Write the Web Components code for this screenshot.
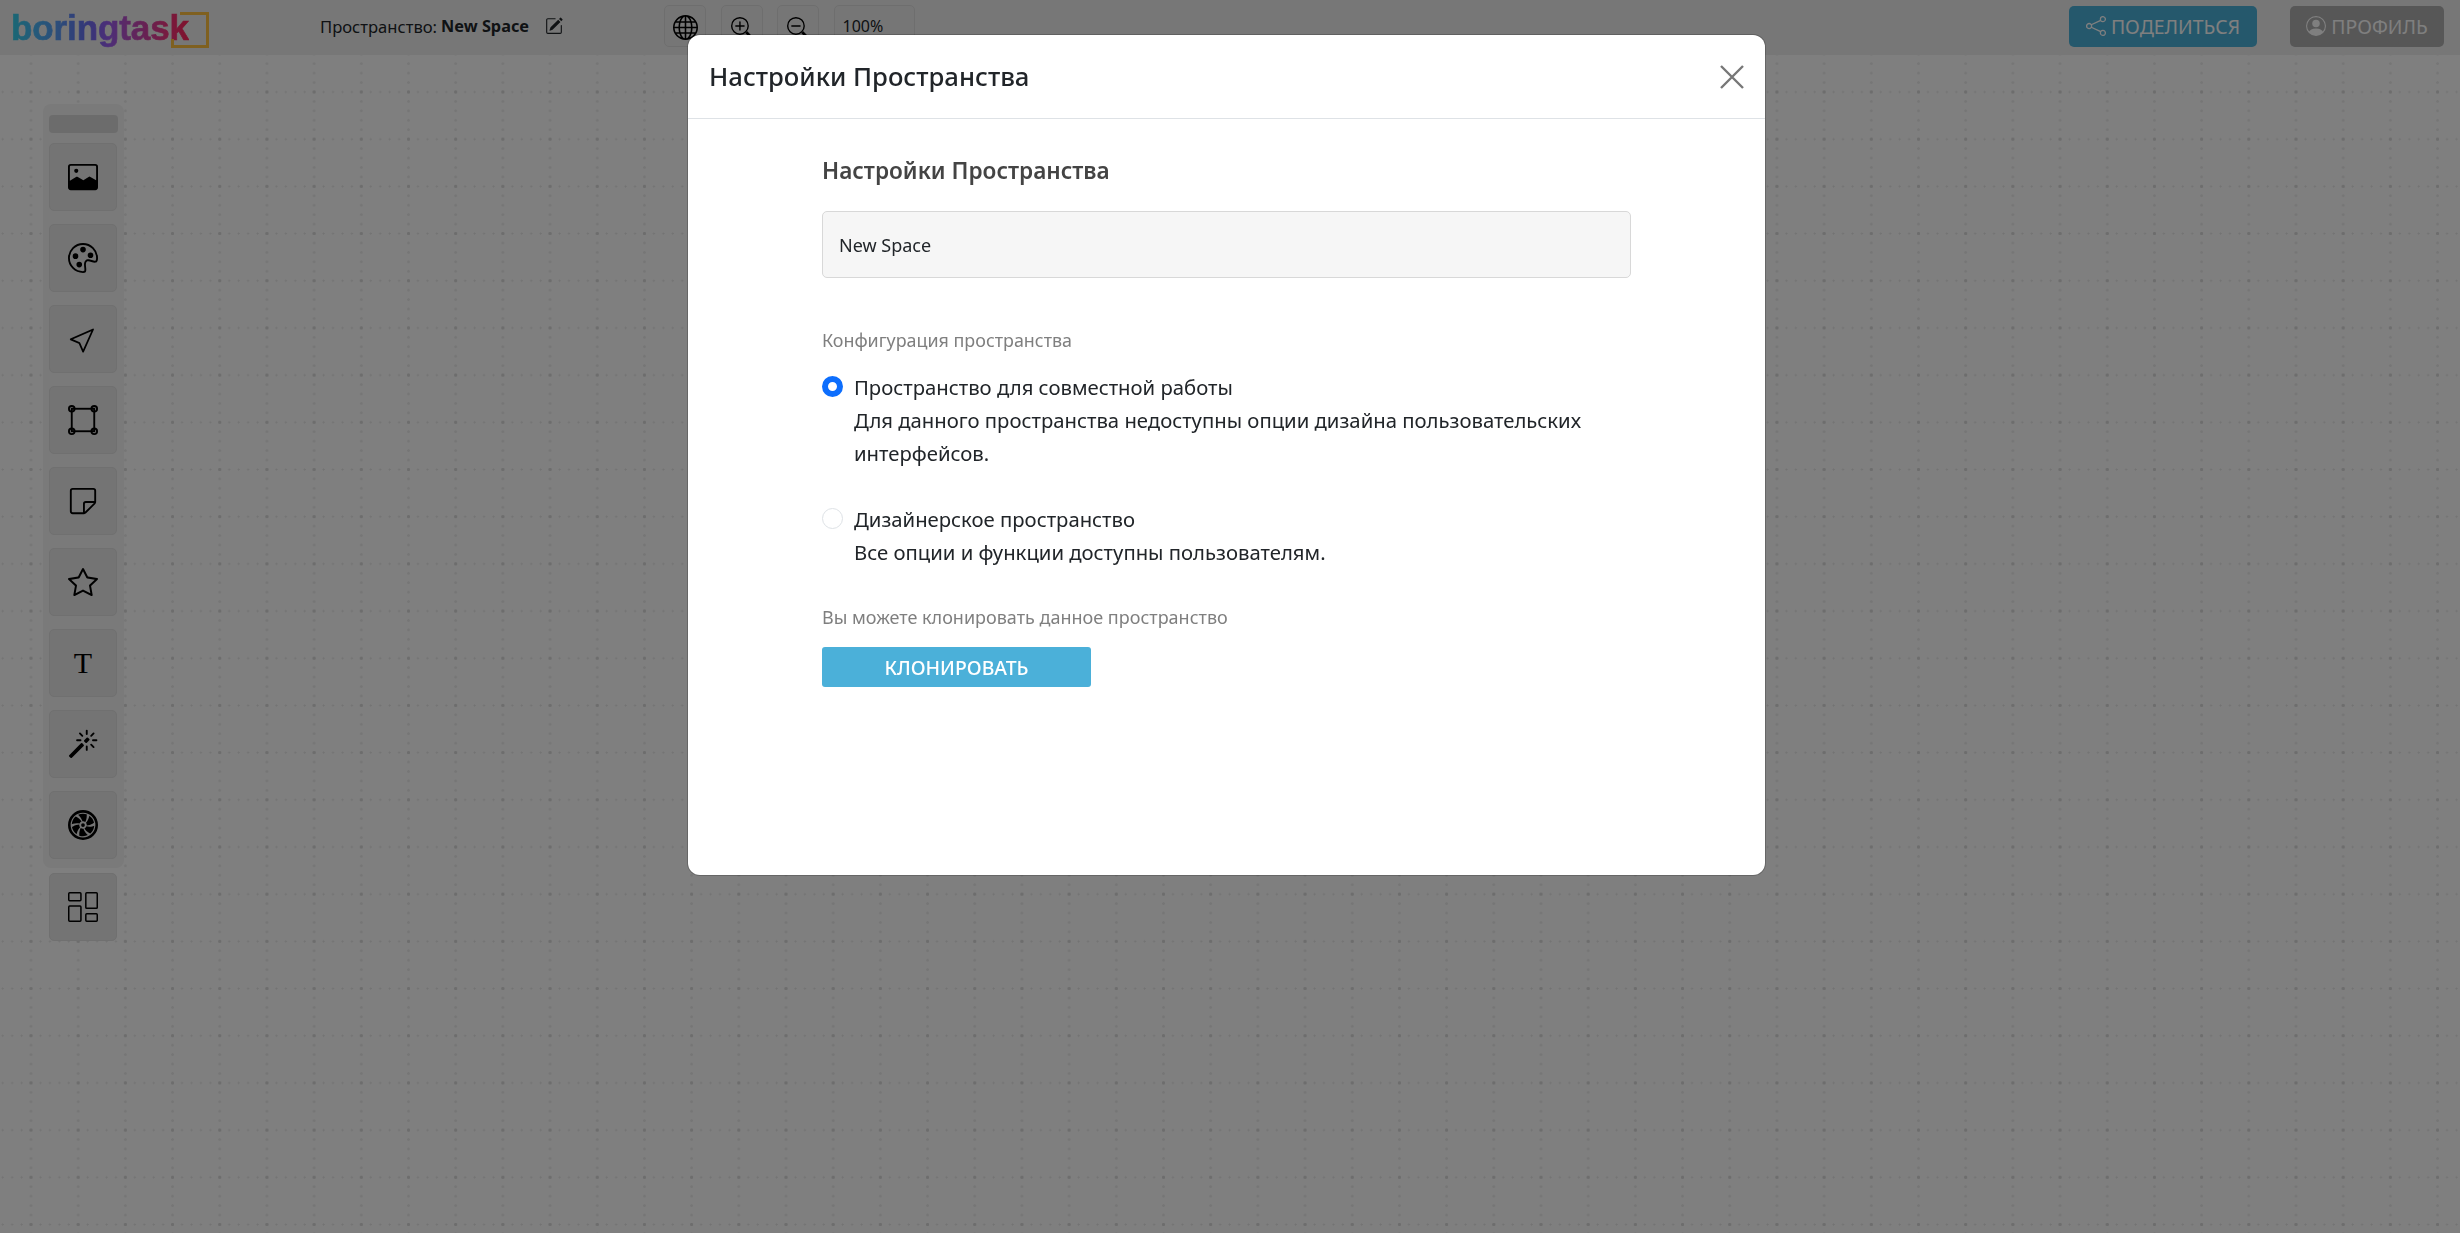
<!DOCTYPE html>
<html lang="en">
  <head>
    <meta charset="UTF-8" />
    <title>boringtask</title>
    <style>
      html, body { margin: 0; height: 100%; overflow: hidden; }
      body { font-family: "Noto Sans", "Open Sans", sans-serif; color: #212529; }
    </style>
  </head>
  <body>
    <app-canvas>
      <top-bar slot="top"></top-bar>
      <tool-panel slot="tools"></tool-panel>
    </app-canvas>

    <settings-modal title="Настройки Пространства">
      <space-option checked title="Пространство для совместной работы">Для данного пространства недоступны опции дизайна пользовательских интерфейсов.</space-option>
      <space-option title="Дизайнерское пространство">Все опции и функции доступны пользователям.</space-option>
    </settings-modal>

    <script type="text/javascript">
      const ICONS = {
        palette: '<path d="M8 5a1.5 1.5 0 1 0 0-3 1.5 1.5 0 0 0 0 3zm4 3a1.5 1.5 0 1 0 0-3 1.5 1.5 0 0 0 0 3zM5.5 7a1.5 1.5 0 1 1-3 0 1.5 1.5 0 0 1 3 0zm.5 6a1.5 1.5 0 1 0 0-3 1.5 1.5 0 0 0 0 3z"/><path d="M16 8c0 3.15-1.866 2.585-3.567 2.07C11.42 9.763 10.465 9.473 10 10c-.603.683-.475 1.819-.351 2.92C9.826 14.495 9.996 16 8 16a8 8 0 1 1 8-8zm-8 7c.611 0 .654-.171.655-.176.078-.146.124-.464.07-1.119-.014-.168-.037-.37-.061-.591-.052-.464-.112-1.005-.118-1.462-.01-.707.083-1.61.704-2.314.369-.417.845-.578 1.272-.618.404-.038.812.026 1.16.104.343.077.702.186 1.025.284l.028.008c.346.105.658.199.953.266.653.148.904.083.991.024C14.717 9.38 15 9.161 15 8a7 7 0 1 0-7 7z"/>',
        cursor: '<path d="M14.082 2.182a.5.5 0 0 1 .103.557L8.528 15.467a.5.5 0 0 1-.917-.007L5.57 10.694.803 8.652a.5.5 0 0 1-.006-.916l12.728-5.657a.5.5 0 0 1 .556.103zM2.25 8.184l3.897 1.67a.5.5 0 0 1 .262.263l1.67 3.897L12.743 3.52 2.25 8.184z"/>',
        sticky: '<path d="M2.5 1A1.5 1.5 0 0 0 1 2.5v11A1.5 1.5 0 0 0 2.5 15h6.086a1.5 1.5 0 0 0 1.06-.44l4.915-4.914A1.5 1.5 0 0 0 15 8.586V2.5A1.5 1.5 0 0 0 13.5 1h-11zM2 2.5a.5.5 0 0 1 .5-.5h11a.5.5 0 0 1 .5.5V8H9.5A1.5 1.5 0 0 0 8 9.5V14H2.5a.5.5 0 0 1-.5-.5v-11zm7 11.293V9.5a.5.5 0 0 1 .5-.5h4.293L9 13.793z"/>',
        star: '<path d="M2.866 14.85c-.078.444.36.791.746.593l4.39-2.256 4.389 2.256c.386.198.824-.149.746-.592l-.83-4.73 3.522-3.356c.33-.314.16-.888-.282-.95l-4.898-.696L8.465.792a.513.513 0 0 0-.927 0L5.354 5.12l-4.898.696c-.441.062-.612.636-.283.95l3.523 3.356-.83 4.73zm4.905-2.767-3.686 1.894.694-3.957a.565.565 0 0 0-.163-.505L1.71 6.745l4.052-.576a.525.525 0 0 0 .393-.288L8 2.223l1.847 3.658a.525.525 0 0 0 .393.288l4.052.575-2.906 2.77a.565.565 0 0 0-.163.506l.694 3.957-3.686-1.894a.503.503 0 0 0-.461 0z"/>',
        magic: '<path d="M9.5 2.672a.5.5 0 1 0 1 0V.843a.5.5 0 0 0-1 0v1.829Zm4.5.035A.5.5 0 0 0 13.293 2L12 3.293a.5.5 0 1 0 .707.707L14 2.707ZM7.293 4A.5.5 0 1 0 8 3.293L6.707 2A.5.5 0 0 0 6 2.707L7.293 4Zm-.621 2.5a.5.5 0 1 0 0-1H4.843a.5.5 0 1 0 0 1h1.829Zm8.485 0a.5.5 0 1 0 0-1h-1.829a.5.5 0 0 0 0 1h1.829ZM13.293 10A.5.5 0 1 0 14 9.293L12.707 8a.5.5 0 1 0-.707.707L13.293 10ZM9.5 11.157a.5.5 0 0 0 1 0V9.328a.5.5 0 0 0-1 0v1.829Zm1.854-5.097a.5.5 0 0 0 0-.706l-.708-.708a.5.5 0 0 0-.707 0L8.646 5.94a.5.5 0 0 0 0 .707l.708.708a.5.5 0 0 0 .707 0l1.293-1.293Zm-3 3a.5.5 0 0 0 0-.706l-.708-.708a.5.5 0 0 0-.707 0L.646 13.94a.5.5 0 0 0 0 .707l.708.708a.5.5 0 0 0 .707 0L8.354 9.06Z"/>',
        image: '<path fill-rule="evenodd" d="M1.5 1A1.5 1.5 0 0 0 0 2.5v11A1.5 1.5 0 0 0 1.5 15h13a1.5 1.5 0 0 0 1.5-1.5v-11A1.5 1.5 0 0 0 14.5 1h-13zm0 1h13a.5.5 0 0 1 .5.5v7.2l-3.3-1.9a.5.5 0 0 0-.5 0L8.2 9.7 5 7.9a.5.5 0 0 0-.5 0L1 10v-7.5a.5.5 0 0 1 .5-.5z"/><circle cx="4.4" cy="4.7" r="1.1"/>',
        box: '<g fill="none" stroke="currentColor" stroke-width="1"><rect x="2" y="2" width="12" height="12"/><circle cx="2" cy="2" r="1.5" fill="none"/><circle cx="14" cy="2" r="1.5"/><circle cx="2" cy="14" r="1.5"/><circle cx="14" cy="14" r="1.5"/></g>',
        fan: '<path d="M10 3c0 1.313-.304 2.508-.8 3.4a1.991 1.991 0 0 0-1.484-.38c-.28-.982-.91-2.04-1.838-2.969a8.368 8.368 0 0 0-.491-.454A5.976 5.976 0 0 1 8 2c.691 0 1.355.117 1.973.332.018.219.027.442.027.668Zm0 5c0 .073-.004.146-.012.217 1.018-.019 2.2-.353 3.331-1.006a8.39 8.39 0 0 0 .57-.361 6.004 6.004 0 0 0-2.53-3.823 9.02 9.02 0 0 1-.145.64c-.34 1.269-.944 2.346-1.656 3.079.277.343.442.78.442 1.254Zm-.137.728a2.007 2.007 0 0 1-1.07 1.109c.525.87 1.405 1.725 2.535 2.377.2.116.402.222.605.317a5.986 5.986 0 0 0 2.053-4.111c-.208.073-.421.14-.641.199-1.264.339-2.493.356-3.482.11ZM8 10c-.45 0-.866-.149-1.2-.4-.494.89-.796 2.082-.796 3.391 0 .23.01.457.027.678A5.99 5.99 0 0 0 8 14c.94 0 1.83-.216 2.623-.602a8.359 8.359 0 0 1-.497-.458c-.925-.926-1.555-1.981-1.836-2.96-.094.013-.191.02-.29.02ZM6 8c0-.08.005-.16.014-.239-1.02.017-2.205.351-3.34 1.007a8.366 8.366 0 0 0-.568.359 6.003 6.003 0 0 0 2.525 3.839 8.37 8.37 0 0 1 .148-.653c.34-1.267.94-2.342 1.65-3.075A1.988 1.988 0 0 1 6 8Zm-3.347-.632c1.267-.34 2.498-.355 3.488-.107.196-.494.583-.89 1.07-1.1-.524-.874-1.406-1.733-2.541-2.388a8.363 8.363 0 0 0-.594-.312 5.987 5.987 0 0 0-2.06 4.106c.206-.074.418-.14.637-.199ZM8 9a1 1 0 1 0 0-2 1 1 0 0 0 0 2Z"/><circle cx="8" cy="8" r="7.3" fill="none" stroke="currentColor" stroke-width="1.4"/>',
        layout: '<g fill="none" stroke="currentColor" stroke-width=".8"><rect x=".4" y=".4" width="6.5" height="4.2" rx=".5"/><rect x=".4" y="7.5" width="6.5" height="8.1" rx=".5"/><rect x="9.5" y=".4" width="6.1" height="8.3" rx=".5"/><rect x="9.5" y="11.6" width="6.1" height="4" rx=".5"/></g>',
        globe: '<path d="M0 8a8 8 0 1 1 16 0A8 8 0 0 1 0 8zm7.5-6.923c-.67.204-1.335.82-1.887 1.855A7.97 7.97 0 0 0 5.145 4H7.5V1.077zM4.09 4a9.267 9.267 0 0 1 .64-1.539 6.7 6.7 0 0 1 .597-.933A7.025 7.025 0 0 0 2.255 4H4.09zm-.582 3.5c.03-.877.138-1.718.312-2.5H1.674a6.958 6.958 0 0 0-.656 2.5h2.49zM4.847 5a12.5 12.5 0 0 0-.338 2.5H7.5V5H4.847zM8.5 5v2.5h2.99a12.495 12.495 0 0 0-.337-2.5H8.5zM4.51 8.5a12.5 12.5 0 0 0 .337 2.5H7.5V8.5H4.51zm3.99 0V11h2.653c.187-.765.306-1.608.338-2.5H8.5zM5.145 12c.138.386.295.744.468 1.068.552 1.035 1.218 1.65 1.887 1.855V12H5.145zm.182 2.472a6.696 6.696 0 0 1-.597-.933A9.268 9.268 0 0 1 4.09 12H2.255a7.024 7.024 0 0 0 3.072 2.472zM3.82 11a13.652 13.652 0 0 1-.312-2.5h-2.49c.062.89.291 1.733.656 2.5H3.82zm6.853 3.472A7.024 7.024 0 0 0 13.745 12H11.91a9.27 9.27 0 0 1-.64 1.539 6.688 6.688 0 0 1-.597.933zM8.5 12v2.923c.67-.204 1.335-.82 1.887-1.855.173-.324.33-.682.468-1.068H8.5zm3.68-1h2.146c.365-.767.594-1.61.656-2.5h-2.49a13.65 13.65 0 0 1-.312 2.5zm2.802-3.5a6.959 6.959 0 0 0-.656-2.5H12.18c.174.782.282 1.623.312 2.5h2.49zM11.27 2.461c.247.464.462.98.64 1.539h1.835a7.024 7.024 0 0 0-3.072-2.472c.218.284.418.598.597.933zM10.855 4a7.966 7.966 0 0 0-.468-1.068C9.835 1.897 9.17 1.282 8.5 1.077V4h2.355z"/>',
        zoomIn: '<path fill-rule="evenodd" d="M6.5 12a5.5 5.5 0 1 0 0-11 5.5 5.5 0 0 0 0 11zM13 6.5a6.5 6.5 0 1 1-13 0 6.5 6.5 0 0 1 13 0z"/><path d="M10.344 11.742c.03.04.062.078.098.115l3.85 3.85a1 1 0 0 0 1.415-1.414l-3.85-3.85a1.007 1.007 0 0 0-.115-.1 6.538 6.538 0 0 1-1.398 1.4z"/><path fill-rule="evenodd" d="M6.5 3a.5.5 0 0 1 .5.5V6h2.5a.5.5 0 0 1 0 1H7v2.5a.5.5 0 0 1-1 0V7H3.5a.5.5 0 0 1 0-1H6V3.5a.5.5 0 0 1 .5-.5z"/>',
        zoomOut: '<path fill-rule="evenodd" d="M6.5 12a5.5 5.5 0 1 0 0-11 5.5 5.5 0 0 0 0 11zM13 6.5a6.5 6.5 0 1 1-13 0 6.5 6.5 0 0 1 13 0z"/><path d="M10.344 11.742c.03.04.062.078.098.115l3.85 3.85a1 1 0 0 0 1.415-1.414l-3.85-3.85a1.007 1.007 0 0 0-.115-.1 6.538 6.538 0 0 1-1.398 1.4z"/><path fill-rule="evenodd" d="M3 6.5a.5.5 0 0 1 .5-.5h6a.5.5 0 0 1 0 1h-6a.5.5 0 0 1-.5-.5z"/>',
        edit: '<path d="M15.502 1.94a.5.5 0 0 1 0 .706L14.459 3.69l-2-2L13.502.646a.5.5 0 0 1 .707 0l1.293 1.293zm-1.75 2.456-2-2L4.939 9.21a.5.5 0 0 0-.121.196l-.805 2.414a.25.25 0 0 0 .316.316l2.414-.805a.5.5 0 0 0 .196-.12l6.813-6.814z"/><path fill-rule="evenodd" d="M1 13.5A1.5 1.5 0 0 0 2.5 15h11a1.5 1.5 0 0 0 1.5-1.5v-6a.5.5 0 0 0-1 0v6a.5.5 0 0 1-.5.5h-11a.5.5 0 0 1-.5-.5v-11a.5.5 0 0 1 .5-.5H9a.5.5 0 0 0 0-1H2.5A1.5 1.5 0 0 0 1 2.5v11z"/>',
        share: '<path d="M13.5 1a1.5 1.5 0 1 0 0 3 1.5 1.5 0 0 0 0-3zM11 2.5a2.5 2.5 0 1 1 .603 1.628l-6.718 3.12a2.499 2.499 0 0 1 0 1.504l6.718 3.12a2.5 2.5 0 1 1-.488.876l-6.718-3.12a2.5 2.5 0 1 1 0-3.256l6.718-3.12A2.5 2.5 0 0 1 11 2.5zm-8.5 4a1.5 1.5 0 1 0 0 3 1.5 1.5 0 0 0 0-3zm11 5.5a1.5 1.5 0 1 0 0 3 1.5 1.5 0 0 0 0-3z"/>',
        person: '<path d="M11 6a3 3 0 1 1-6 0 3 3 0 0 1 6 0z"/><path fill-rule="evenodd" d="M0 8a8 8 0 1 1 16 0A8 8 0 0 1 0 8zm8-7a7 7 0 0 0-5.468 11.37C3.242 11.226 4.805 10 8 10s4.757 1.225 5.468 2.37A7 7 0 0 0 8 1z"/>',
      }

      class BiIcon extends HTMLElement {
        constructor() {
          super()
          const size = this.getAttribute('size') || 16
          this.attachShadow({ mode: 'open' }).innerHTML = `
            <style>
              :host { display: inline-flex; line-height: 0; }
            </style>
            <svg width="${size}" height="${size}" viewBox="0 0 16 16" fill="currentColor">${ICONS[this.getAttribute('name')]}</svg>`
        }
      }

      class AppCanvas extends HTMLElement {
        constructor() {
          super()
          this.attachShadow({ mode: 'open' }).innerHTML = `
            <style>
              :host { display: flex; flex-direction: column; height: 100vh; background: #fff; }
              main {
                flex: 1;
                padding: 49px 0 0 43px;
                background-image:
                  radial-gradient(circle at 1.5px 1.5px, #dadada 1.2px, transparent 1.8px),
                  radial-gradient(circle at 1.5px 1.5px, #e6e6e6 .8px, transparent 1.3px),
                  radial-gradient(circle at 1.5px 1.5px, #ececec 1px, transparent 1.6px);
                background-size: 47.2px 47.2px, 9.44px 47.2px, 47.2px 9.44px;
                background-position: 29.5px 35.5px, 29.5px 35.5px, 29.5px 35.5px;
              }
            </style>
            <slot name="top"></slot>
            <main><slot name="tools"></slot></main>`
        }
      }

      class TopBar extends HTMLElement {
        constructor() {
          super()
          this.attachShadow({ mode: 'open' }).innerHTML = `
            <style>
              :host { display: flex; align-items: center; height: 55px; box-sizing: border-box; padding: 0 16px 3px 11px; background: #efefef; font-size: 16.6px; color: #212529; }
              .logo { flex: none; width: 198px; height: 36px; margin-top: 7px; position: relative; font: bold 35px/32px "Liberation Sans", sans-serif; letter-spacing: -.1px; }
              .logo b { display: inline-block; height: 36px; background: linear-gradient(90deg, #34d0e8 0%, #48b8f4 12%, #5a96f4 28%, #6870f0 42%, #9a5cf0 55%, #b850c8 65%, #d4409e 78%, #f03680 88%, #ff2458 100%); -webkit-background-clip: text; background-clip: text; color: transparent; -webkit-text-stroke: .7px transparent; }
              .frame { position: absolute; left: 169px; top: 0; width: 29px; height: 36px; box-sizing: border-box; border: solid #ffc040; border-width: 3px 3px 3px 0; }
              .stub { position: absolute; left: 160px; bottom: 0; width: 9px; height: 9px; box-sizing: border-box; border: solid #ffc040; border-width: 0 0 3px 3px; }
              .name { margin-left: 111px; display: flex; align-items: center; gap: 4px; width: 344px; }
              .name strong { font-size: 16.3px; font-weight: 700; }
              .name bi-icon { margin-left: 12px; }
              .tool { width: 42px; height: 42px; box-sizing: border-box; margin-right: 14.5px; padding-top: 3px; display: flex; align-items: center; justify-content: center; background: #ededed; border: 1px solid #ddd; border-radius: 5px; color: #000; }
              .pct { width: 81px; justify-content: flex-start; padding: 0 0 0 8px; font-size: 16px; color: #212529; }
              .spacer { flex: 1; }
              .btn { height: 41px; box-sizing: border-box; display: flex; align-items: center; justify-content: center; gap: 5px; border-radius: 5px; color: #fff; font-size: 19.4px; }
              .share { width: 188px; background: #4bb0d9; margin-right: 33px; }
              .profile { width: 154px; background: #aeaeae; }
            </style>
            <div class="logo"><b>boringtask</b><span class="frame"></span><span class="stub"></span></div>
            <div class="name"><span>Пространство:</span> <strong>New Space</strong><bi-icon name="edit" size="18"></bi-icon></div>
            <div class="tool"><bi-icon name="globe" size="25"></bi-icon></div>
            <div class="tool"><bi-icon name="zoomIn" size="22"></bi-icon></div>
            <div class="tool"><bi-icon name="zoomOut" size="22"></bi-icon></div>
            <div class="tool pct">100%</div>
            <div class="spacer"></div>
            <div class="btn share"><bi-icon name="share" size="20"></bi-icon>ПОДЕЛИТЬСЯ</div>
            <div class="btn profile"><bi-icon name="person" size="20"></bi-icon>ПРОФИЛЬ</div>`
        }
      }

      class ToolPanel extends HTMLElement {
        constructor() {
          super()
          const item = (name, size) => `<div class="tool"><bi-icon name="${name}" size="${size || 30}"></bi-icon></div>`
          this.attachShadow({ mode: 'open' }).innerHTML = `
            <style>
              :host { display: flex; flex-direction: column; align-items: flex-start; gap: 5px; width: 81px; }
              .panel { width: 81px; box-sizing: border-box; padding: 11px 6px 9px; background: #f4f4f4; border-radius: 8px; display: flex; flex-direction: column; gap: 13px; }
              .handle { height: 18px; background: #d8d8d8; border-radius: 4px; margin-bottom: -3px; }
              .tool { width: 68px; height: 68px; box-sizing: border-box; display: flex; align-items: center; justify-content: center; background: #e8e8e8; border: 1px solid #e0e0e0; border-radius: 5px; color: #000; }
              .t { font: 30px/1 "Liberation Serif", serif; }
              .last { margin-left: 6px; }
            </style>
            <div class="panel">
              <div class="handle"></div>
              ${item('image')}${item('palette')}${item('cursor', 28)}${item('box')}${item('sticky')}${item('star')}
              <div class="tool t">T</div>
              ${item('magic')}${item('fan')}
            </div>
            <div class="tool last"><bi-icon name="layout" size="30"></bi-icon></div>`
        }
      }

      class SpaceOption extends HTMLElement {
        constructor() {
          super()
          this.attachShadow({ mode: 'open' }).innerHTML = `
            <style>
              :host { display: flex; gap: 11px; font-size: 20.3px; line-height: 33px; color: #212529; }
              .radio { flex: none; width: 21px; height: 21px; margin-top: 5px; box-sizing: border-box; border-radius: 50%; border: 1px solid #dee2e6; background: #fff; }
              :host([checked]) .radio { border: 6px solid #0d6efd; }
            </style>
            <div class="radio"></div>
            <div><div>${this.getAttribute('title')}</div><slot></slot></div>`
        }
      }

      class SettingsModal extends HTMLElement {
        constructor() {
          super()
          this.attachShadow({ mode: 'open' }).innerHTML = `
            <style>
              :host { position: fixed; inset: 0; display: flex; justify-content: center; align-items: flex-start; background: rgba(0,0,0,.5); padding-right: 7px; }
              .dialog { width: 1077px; height: 840px; margin-top: 35px; box-sizing: border-box; background: #fff; border-radius: 12px; box-shadow: 0 0 0 1px rgba(0,0,0,.2); display: flex; flex-direction: column; }
              header { height: 84px; box-sizing: border-box; padding: 0 21px; border-bottom: 1px solid #dee2e6; display: flex; align-items: center; justify-content: space-between; font-size: 25.7px; font-weight: 500; color: #212529; }
              .body { padding: 0 134px; }
              h5 { margin: 37px 0 25px; font-size: 22.6px; line-height: 30px; font-weight: 600; color: #444; }
              .input { height: 67px; box-sizing: border-box; padding: 0 16px; display: flex; align-items: center; background: #f6f6f6; border: 1px solid #d8d8d8; border-radius: 5px; font-size: 18px; color: #212529; }
              .label { margin: 50px 0 19px; font-size: 17.9px; line-height: 24px; color: #7f7f7f; }
              .options { display: flex; flex-direction: column; gap: 33px; }
              .label2 { margin: 36px 0 18px; font-size: 18px; line-height: 24px; color: #7f7f7f; }
              .clone { width: 269px; height: 40px; display: flex; align-items: center; justify-content: center; background: #4bb0d9; color: #fff; border-radius: 3px; font-size: 19.4px; font-weight: 500; }
              svg { display: block; }
            </style>
            <div class="dialog">
              <header><span>${this.getAttribute('title')}</span>
                <svg width="24" height="24" viewBox="0 0 24 24" stroke="#777" stroke-width="2.4"><path d="M1 1l22 22M23 1L1 23"/></svg>
              </header>
              <div class="body">
                <h5>${this.getAttribute('title')}</h5>
                <div class="input">New Space</div>
                <div class="label">Конфигурация пространства</div>
                <div class="options"><slot></slot></div>
                <div class="label2">Вы можете клонировать данное пространство</div>
                <div class="clone">КЛОНИРОВАТЬ</div>
              </div>
            </div>`
        }
      }

      customElements.define('bi-icon', BiIcon)
      customElements.define('app-canvas', AppCanvas)
      customElements.define('top-bar', TopBar)
      customElements.define('tool-panel', ToolPanel)
      customElements.define('space-option', SpaceOption)
      customElements.define('settings-modal', SettingsModal)
    </script>
  </body>
</html>
